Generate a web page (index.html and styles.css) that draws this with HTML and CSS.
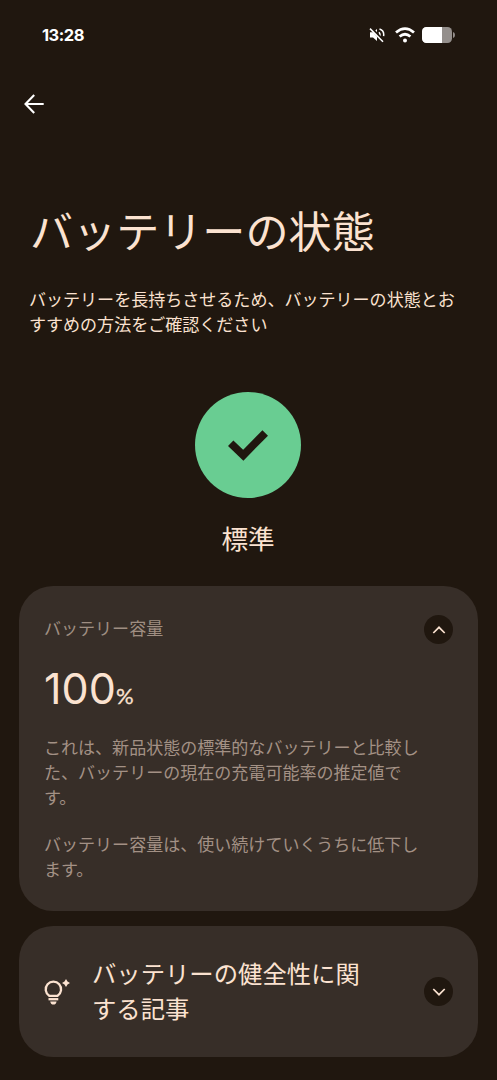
FILE: index.html
```html
<!DOCTYPE html>
<html lang="ja">
<head>
<meta charset="utf-8">
<meta name="viewport" content="width=device-width, initial-scale=1">
<title>バッテリーの状態</title>
<link rel="stylesheet" href="styles.css">
</head>
<body>
<header class="status-bar">
  <time class="clock">13:28</time>
  <div class="status-icons">
    <svg class="mute" viewBox="0 0 16 16" fill="none" stroke="currentColor" stroke-width="1.5">
      <path d="M1 5.3h3L8 2v12l-4-3.5H1z" fill="currentColor" stroke="none"/>
      <path d="M10 5.2q2 2.6 0 5.4M10.5 2q5 1.5 4.1 7.1"/>
      <path d="M2 1l13 14" stroke="#20170f" stroke-width="3"/>
      <path d="M1 1.6l13 13.2"/>
    </svg>
    <svg class="wifi" viewBox="0 0 20 16" fill="none" stroke="currentColor" stroke-width="2.8">
      <path d="M1 5.5q9-7.7 18 0M4.6 9.5q5.4-4.5 10.8 0"/>
      <circle cx="10" cy="13.4" r="2" fill="currentColor" stroke="none"/>
    </svg>
    <svg class="battery" viewBox="0 0 33 16">
      <rect width="30" height="16" rx="4.5" fill="#948f8c"/>
      <path d="M4.5 0H20v16H4.5A4.5 4.5 0 0 1 0 11.5v-7A4.5 4.5 0 0 1 4.5 0z" fill="#fff"/>
      <path d="M31 5q2 .3 2 3t-2 3z" fill="#948f8c"/>
    </svg>
  </div>
</header>
<nav class="toolbar">
  <svg class="back" viewBox="0 0 20 20" fill="none" stroke="currentColor" stroke-width="2.1"><path d="M19.7 10H2M10.2 1L1.5 10l8.7 9"/></svg>
</nav>
<main class="content">
  <h1 class="title">バッテリーの状態</h1>
  <p class="intro">バッテリーを長持ちさせるため、バッテリーの状態とおすすめの方法をご確認ください</p>
  <section class="health">
    <div class="health-badge">
      <svg class="check" viewBox="0 0 40 32" fill="none" stroke="currentColor" stroke-width="7.8"><path d="M2.7 14.2l12.6 12L37.2 3.9"/></svg>
    </div>
    <p class="health-label">標準</p>
  </section>
  <section class="card capacity">
    <div class="card-head">
      <h2 class="label">バッテリー容量</h2>
      <span class="toggle"><svg viewBox="0 0 14 8" fill="none" stroke="currentColor" stroke-width="1.7"><path d="M1.3 7L7 1.3 12.7 7"/></svg></span>
    </div>
    <p class="value">100<span class="unit">%</span></p>
    <p class="detail">これは、新品状態の標準的なバッテリーと比較した、バッテリーの現在の充電可能率の推定値です。</p>
    <p class="detail">バッテリー容量は、使い続けていくうちに低下します。</p>
  </section>
  <section class="card articles">
    <svg class="bulb" viewBox="0 0 26 26" fill="none" stroke="currentColor" stroke-width="2.3">
      <path d="M5.2 16.8a7.7 7.7 0 1 1 8.4 0z"/>
      <path d="M4.5 20.2h9.8"/>
      <path d="M6.2 22.4h6.4q-.8 3.2-3.2 3.2t-3.2-3.2z" fill="currentColor" stroke="none"/>
      <path d="M22 0l1.5 2.5L26 4l-2.5 1.5L22 8l-1.5-2.5L18 4l2.5-1.5z" fill="currentColor" stroke="none"/>
    </svg>
    <h2 class="article-title">バッテリーの健全性に関する記事</h2>
    <span class="toggle"><svg viewBox="0 0 14 8" fill="none" stroke="currentColor" stroke-width="1.7"><path d="M1.3 1L7 6.7 12.7 1"/></svg></span>
  </section>
</main>
</body>
</html>
```
FILE: styles.css
```css
* { box-sizing: border-box; }
body {
  margin: 0;
  min-height: 1080px;
  background: #20170f;
  color: #fbe2d0;
  font-family: "Noto Sans CJK JP", sans-serif;
  line-break: strict;
}
h1, h2, p { margin: 0; font-weight: 400; }
svg { display: block; flex: none; }

.status-bar {
  height: 70px;
  padding: 0 42px;
  display: flex;
  align-items: center;
  justify-content: space-between;
  color: #fff;
}
.clock { font: 700 16.5px/20px Inter, sans-serif; letter-spacing: -0.5px; }
.status-icons { display: flex; align-items: center; }
.mute { width: 16px; height: 16px; margin-right: 10px; }
.wifi { width: 20px; height: 16px; margin-right: 7px; }
.battery { width: 33px; height: 16px; }

.toolbar { height: 67px; padding: 24px 24px; color: #fff; }
.back { width: 20px; height: 20px; }

.content { padding: 60px 19px 0; }
.title { padding-left: 11px; font-size: 43.1px; line-height: 64px; }
.intro { margin-top: 25px; padding-left: 10px; font-size: 17.04px; line-height: 25px; width: 440px; }

.health { margin: 56px 1px 0 0; display: flex; flex-direction: column; align-items: center; }
.health-badge {
  width: 106px;
  height: 106px;
  border-radius: 50%;
  background: #69cd92;
  color: #20170f;
  display: grid;
  place-items: center;
}
.check { width: 40px; height: 32px; }
.health-label { margin-top: 20px; font-size: 26.6px; line-height: 40px; }

.card { background: #372e28; border-radius: 34px; }
.capacity { height: 325px; margin-top: 28px; padding: 27px 25px 0; }
.card-head { display: flex; align-items: flex-end; justify-content: space-between; }
.label { font-size: 17.04px; line-height: 30px; color: #9f8e82; }
.toggle {
  width: 29px;
  height: 29px;
  border-radius: 50%;
  background: #20170f;
  display: grid;
  place-items: center;
  flex: none;
}
.capacity .toggle { margin-bottom: -1px; }
.toggle svg { width: 14px; height: 8px; }
.value { margin-top: 18px; font: 400 43px/54px Inter, sans-serif; letter-spacing: 0.1px; }
.unit { font: 400 22px/1 Lato, sans-serif; letter-spacing: 0; -webkit-text-stroke: 0.3px; }
.detail { width: 376px; margin-top: 19px; font-size: 17.04px; line-height: 25px; color: #a39185; }
.detail + .detail { margin-top: 22px; }

.articles {
  height: 131px;
  margin-top: 15px;
  padding: 0 25px;
  display: flex;
  align-items: center;
}
.bulb { width: 26px; height: 26px; }
.article-title { width: 272px; margin: 0 auto 4px 22px; font-size: 24.35px; line-height: 35px; }
```
